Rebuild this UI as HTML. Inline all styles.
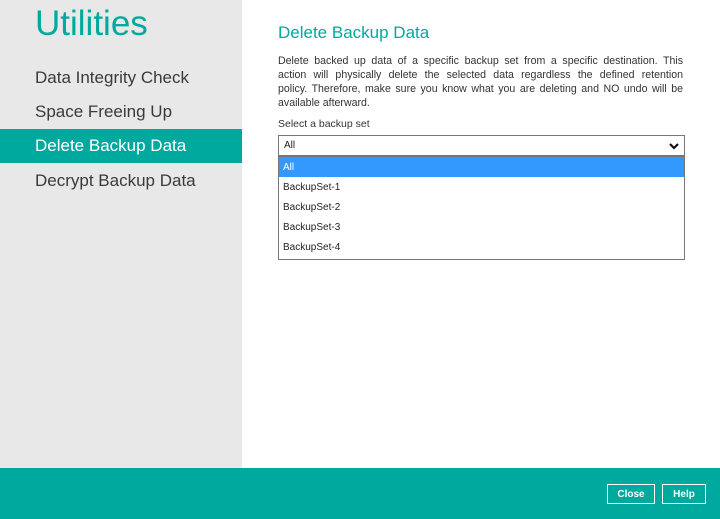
<!DOCTYPE html>
<html><head><style>
body{margin:0;width:720px;height:519px;position:relative;overflow:hidden;font-family:"Liberation Sans",sans-serif;background:#fff}
#side{position:absolute;left:0;top:0;width:242px;height:468px;background:#e8e8e8}
#side h1{position:absolute;left:35px;top:4px;margin:0;font-weight:normal;font-size:35px;color:#00a99d}
.it{position:absolute;left:0;width:242px;height:34px;line-height:34px;padding-left:35px;box-sizing:border-box;font-size:17px;color:#3a3a3a}
.sel{background:#00a99d;color:#fff}
#foot{position:absolute;left:0;top:468px;width:720px;height:51px;background:#00a99d}
.btn{position:absolute;top:484px;height:20px;border:1.5px solid #fff;box-sizing:border-box;color:#fff;font-size:10px;font-weight:bold;text-align:center;line-height:19px}
h2{position:absolute;left:278px;top:23px;margin:0;font-weight:normal;font-size:17px;color:#00a99d}
#desc{position:absolute;left:278px;top:54px;width:405px;font-size:10.6px;line-height:14px;color:#333}
#desc div{white-space:nowrap;text-align:justify;text-align-last:justify}
#desc div.l{text-align-last:left}
#lab{position:absolute;left:278px;top:118px;font-size:10.5px;color:#333}
#box{position:absolute;left:278px;top:135px;width:407px;height:21px;border:1px solid #777;box-sizing:border-box;font-size:10px;line-height:20px;padding-left:5px;color:#222}
#list{position:absolute;left:278px;top:156px;width:407px;height:104px;border:1px solid #777;box-sizing:border-box;font-size:10px;color:#222}
#list div{height:20px;line-height:22px;padding-left:4px}
</style></head><body>
<div id="side"><h1>Utilities</h1>
<div class="it" style="top:61px">Data Integrity Check</div>
<div class="it" style="top:95px">Space Freeing Up</div>
<div class="it sel" style="top:129px">Delete Backup Data</div>
<div class="it" style="top:164px">Decrypt Backup Data</div>
</div>
<h2>Delete Backup Data</h2>
<div id="desc"><div>Delete backed up data of a specific backup set from a specific destination. This</div><div>action will physically delete the selected data regardless the defined retention</div><div>policy. Therefore, make sure you know what you are deleting and NO undo will be</div><div class="l">available afterward.</div></div>
<div id="lab">Select a backup set</div>
<div id="box">All<svg style="position:absolute;right:5px;top:6px" width="10" height="8" viewBox="0 0 10 8"><path d="M1 2 L5 6 L9 2" stroke="#111" stroke-width="2.2" fill="none"/></svg></div>
<div id="list"><div style="background:#3399ff;color:#fff">All</div><div>BackupSet-1</div><div>BackupSet-2</div><div>BackupSet-3</div><div>BackupSet-4</div></div>
<div id="foot"></div>
<div class="btn" style="left:607px;width:48px">Close</div>
<div class="btn" style="left:662px;width:44px">Help</div>
</body></html>
